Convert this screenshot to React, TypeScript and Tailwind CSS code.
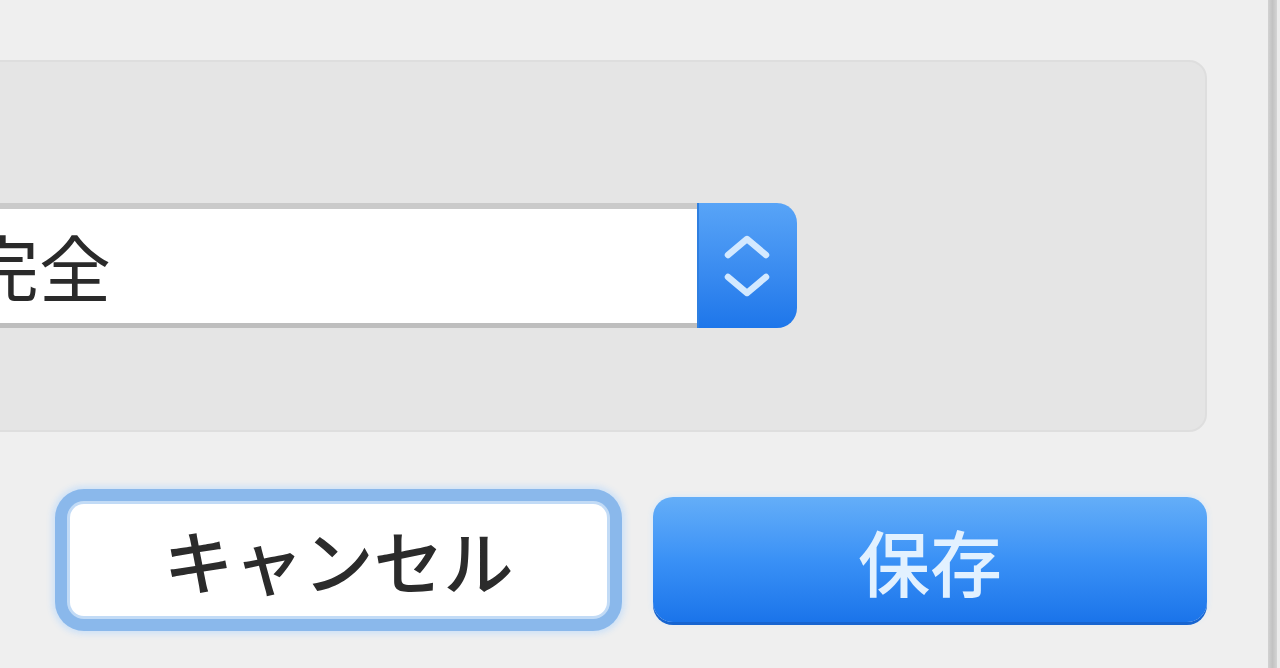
const FONT = "font-['Noto_Sans_CJK_JP','Noto_Sans',sans-serif]";

function Stepper() {
  return (
    <div className="flex w-[100px] shrink-0 items-center justify-center rounded-r-[20px] bg-gradient-to-b from-[#58a4f7] to-[#1d76ea] shadow-[inset_2px_0_0_#2f7fe0]">
      <svg width="48" height="72" viewBox="0 0 48 72" fill="none">
        <path
          d="M5 25 L24 9 L43 25"
          stroke="#d3e9ff"
          strokeWidth="6.5"
          strokeLinecap="round"
          strokeLinejoin="round"
        />
        <path
          d="M5 47 L24 63 L43 47"
          stroke="#d3e9ff"
          strokeWidth="6.5"
          strokeLinecap="round"
          strokeLinejoin="round"
        />
      </svg>
    </div>
  );
}

export default function App() {
  return (
    <div className={`flex h-[668px] w-[1280px] overflow-hidden bg-[#efefef] ${FONT}`}>
      <div className="w-[1268px] shrink-0">
        <div className="-ml-[40px] mt-[60px] h-[372px] w-[1247px] rounded-[18px] border-2 border-[#dedede] bg-[#e5e5e5] pt-[141px]">
          <div className="flex h-[125px] w-[835px]">
            <div className="flex flex-1 items-center overflow-hidden border-t-[6px] border-b-[5px] border-t-[#cacaca] border-b-[#bebebe] bg-white">
              <span className="ml-[5px] pb-[2px] text-[72px] leading-none text-[#2a2a2a]">
                完全
              </span>
            </div>
            <Stepper />
          </div>
        </div>

        <div className="mt-[65px] flex items-center pl-[70px]">
          <button className="flex h-[112px] w-[537px] items-center justify-center rounded-[14px] bg-white shadow-[0_0_0_3px_#c2dbf6,0_0_0_15px_#8ab8eb,0_0_6px_18px_#cde1f7]">
            <span className="text-[70px] font-medium leading-none text-[#2b2b2b]">
              キャンセル
            </span>
          </button>
          <button className="ml-[46px] flex h-[125px] w-[554px] items-center justify-center rounded-[20px] bg-gradient-to-b from-[#64aef8] via-[#3a91f6] to-[#1a74ea] shadow-[0_3px_0_#1865d0,0_0_6px_#cfe6ff]">
            <span className="text-[72px] font-medium leading-none text-[#e2f1ff]">
              保存
            </span>
          </button>
        </div>
      </div>
      <div className="w-[9px] shrink-0 bg-gradient-to-r from-[#d2d2d2] via-[#c2c2c2] to-[#d4d4d4]" />
      <div className="flex-1 bg-[#ececec]" />
    </div>
  );
}
